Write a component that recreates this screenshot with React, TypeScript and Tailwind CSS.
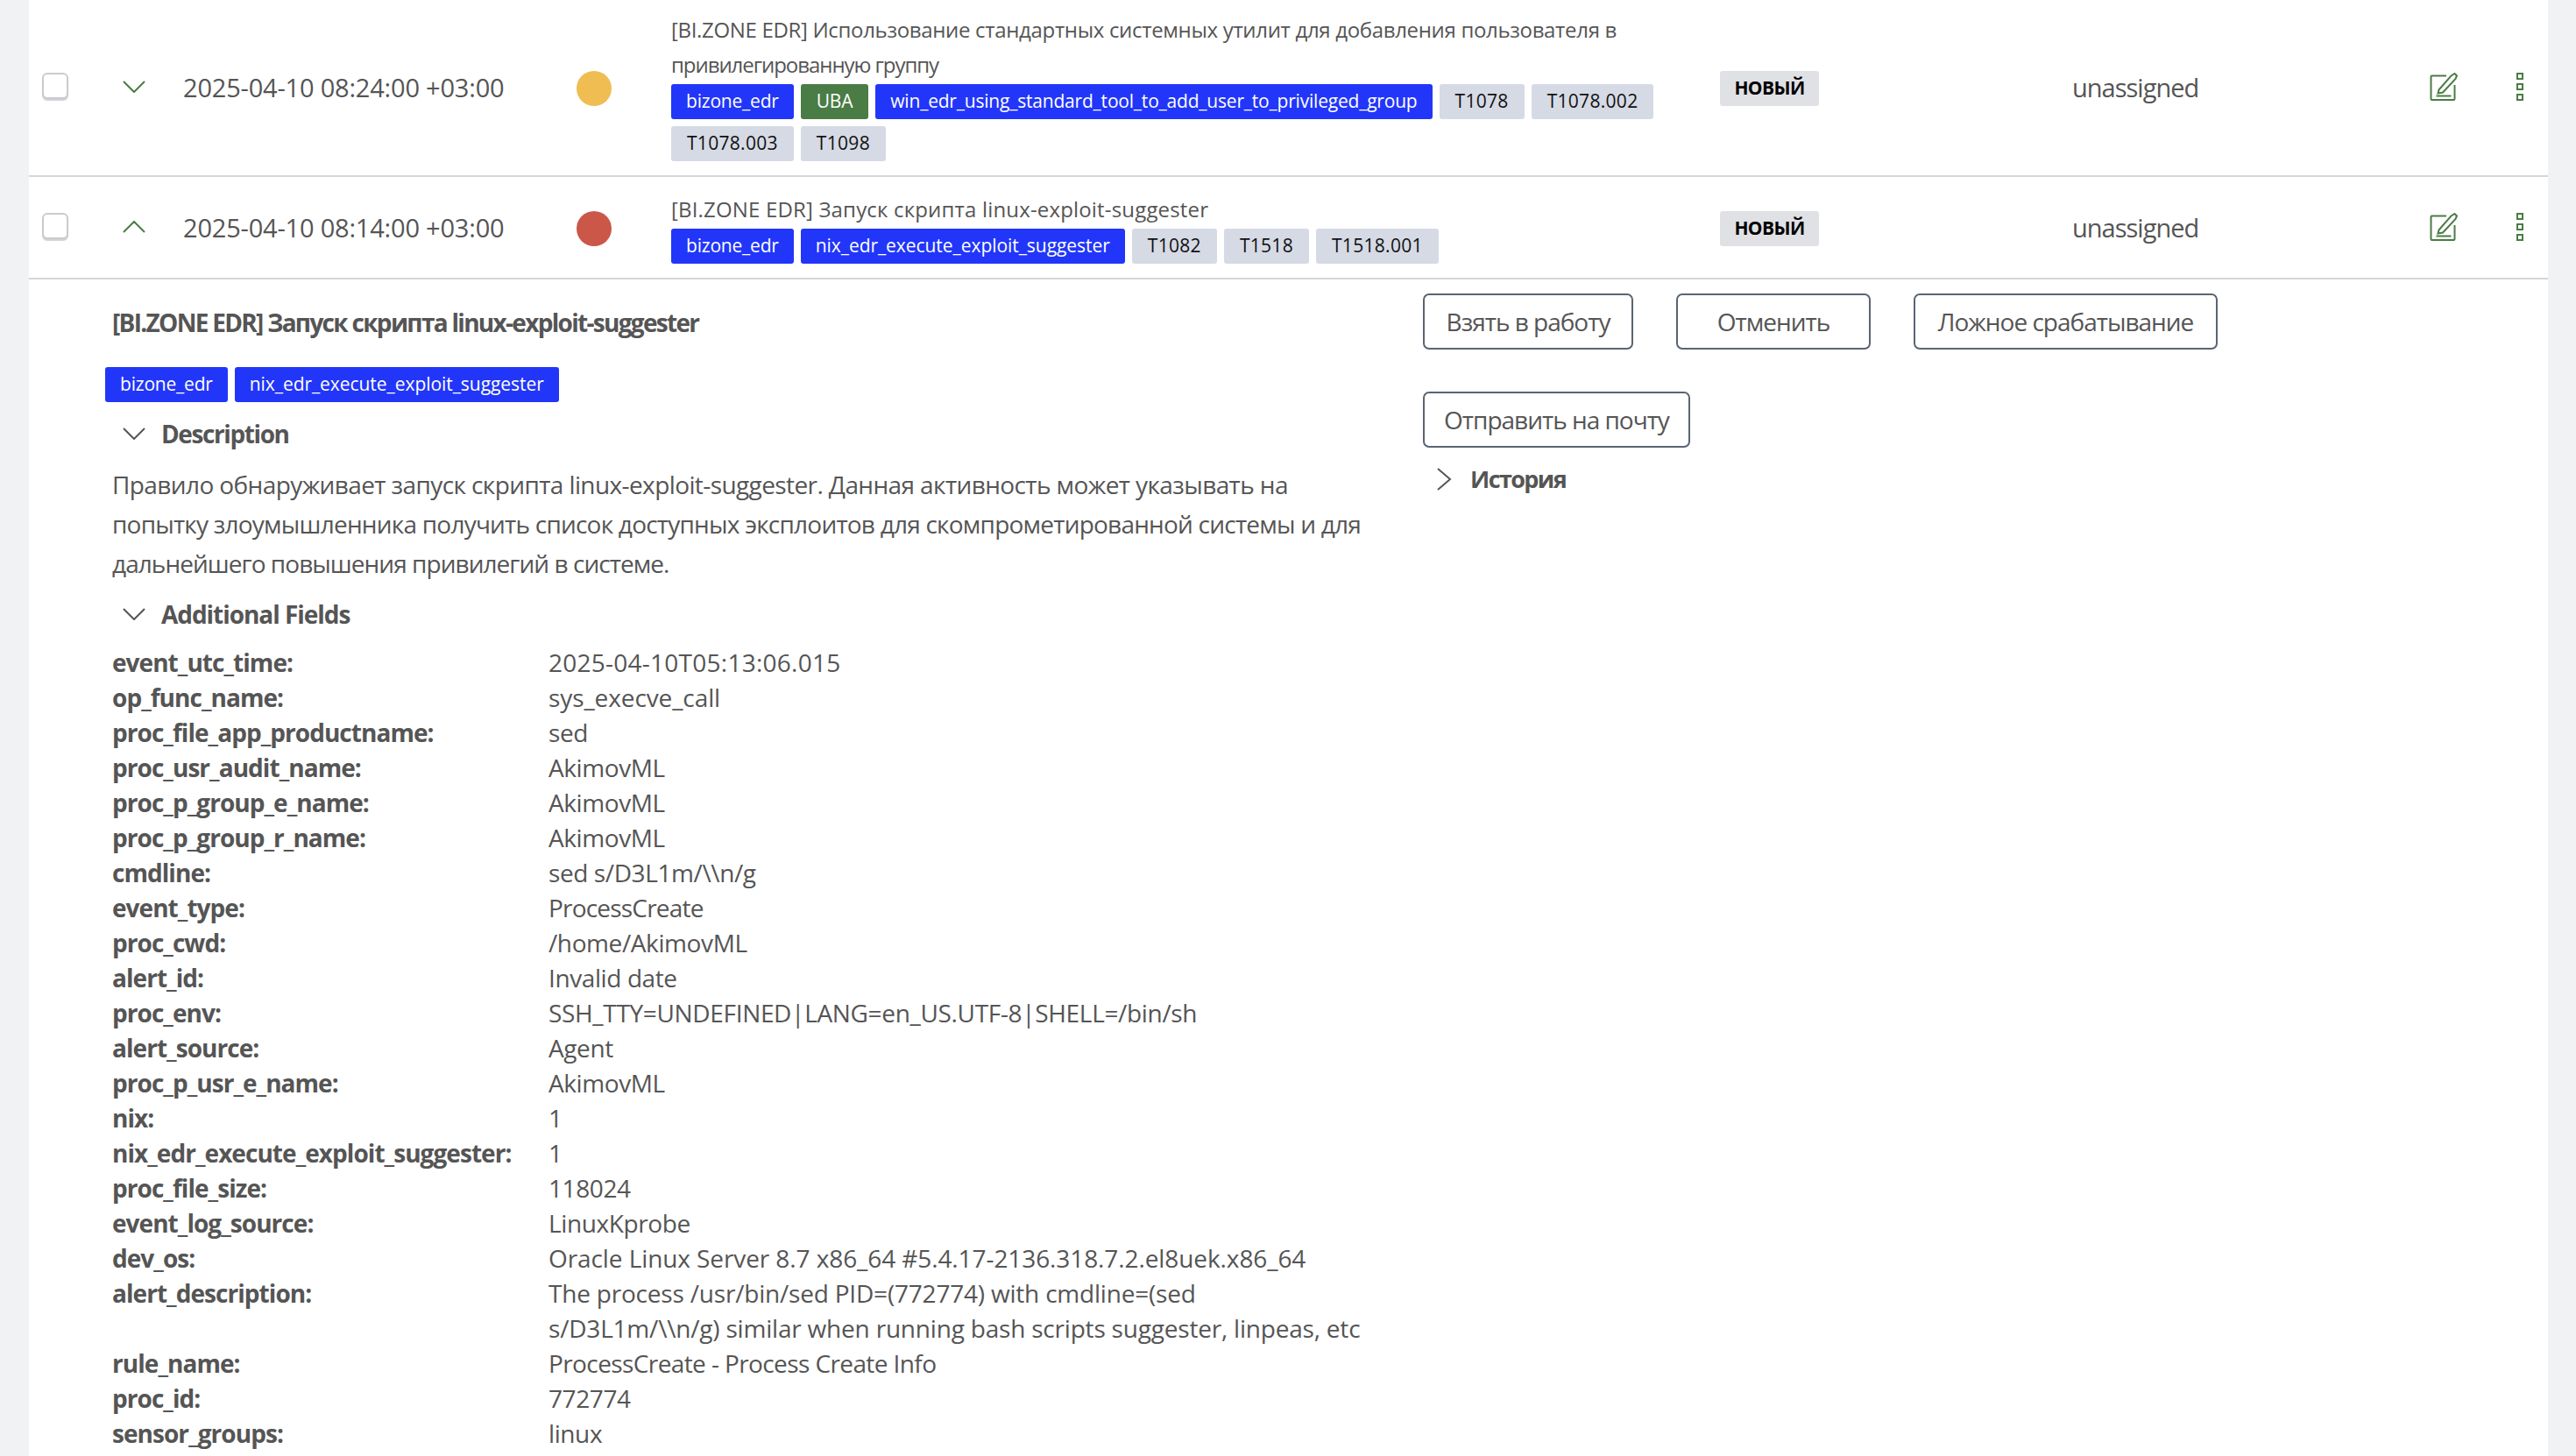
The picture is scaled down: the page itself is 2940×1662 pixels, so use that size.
import clsx from "clsx";

// third item is a per-value tracking fix, the fallback font's widths differ from the original
const fields: [string, string, string?][] = [
  ["event_utc_time:", "2025-04-10T05:13:06.015", "tracking-[0.25px]"],
  ["op_func_name:", "sys_execve_call", "tracking-[-0.1px]"],
  ["proc_file_app_productname:", "sed"],
  ["proc_usr_audit_name:", "AkimovML"],
  ["proc_p_group_e_name:", "AkimovML"],
  ["proc_p_group_r_name:", "AkimovML"],
  ["cmdline:", "sed s/D3L1m/\\\\n/g"],
  ["event_type:", "ProcessCreate", "tracking-[-0.8px]"],
  ["proc_cwd:", "/home/AkimovML"],
  ["alert_id:", "Invalid date"],
  ["proc_env:", "SSH_TTY=UNDEFINED|LANG=en_US.UTF-8|SHELL=/bin/sh", "tracking-[-0.33px]"],
  ["alert_source:", "Agent"],
  ["proc_p_usr_e_name:", "AkimovML"],
  ["nix:", "1"],
  ["nix_edr_execute_exploit_suggester:", "1"],
  ["proc_file_size:", "118024"],
  ["event_log_source:", "LinuxKprobe"],
  ["dev_os:", "Oracle Linux Server 8.7 x86_64 #5.4.17-2136.318.7.2.el8uek.x86_64", "tracking-[-0.09px]"],
  [
    "alert_description:",
    "The process /usr/bin/sed PID=(772774) with cmdline=(sed\ns/D3L1m/\\\\n/g) similar when running bash scripts suggester, linpeas, etc",
    "tracking-[-0.2px]",
  ],
  ["rule_name:", "ProcessCreate - Process Create Info", "tracking-[-0.6px]"],
  ["proc_id:", "772774"],
  ["sensor_groups:", "linux"],
];

type TagKind = "blue" | "blueWide" | "green" | "gray";

const Tag = ({ label, kind = "gray" }: { label: string; kind?: TagKind }) => (
  <span
    className={clsx(
      "flex h-10 items-center rounded-[3px] text-[21px]",
      kind === "blue" && "bg-[#2236f9] px-[17px] tracking-[-0.2px] text-white",
      kind === "blueWide" && "bg-[#2236f9] px-[17px] tracking-[-0.05px] text-white",
      kind === "green" && "bg-[#4a7c45] px-[18px] tracking-[-0.2px] text-white",
      kind === "gray" && "bg-[#d5dae5] px-[18px] tracking-[0.3px] text-[#111]"
    )}
  >
    {label}
  </span>
);

const ChevronDown = () => (
  <svg width="26" height="14" viewBox="0 0 26 14" fill="none" stroke="currentColor" strokeWidth="2" className="shrink-0">
    <path d="M1 1l12 12L25 1" />
  </svg>
);

const ChevronUp = () => (
  <svg width="26" height="14" viewBox="0 0 26 14" fill="none" stroke="currentColor" strokeWidth="2" className="shrink-0">
    <path d="M1 13L13 1l12 12" />
  </svg>
);

const ChevronRight = () => (
  <svg width="18" height="26" viewBox="0 0 18 26" fill="none" stroke="currentColor" strokeWidth="2" className="shrink-0">
    <path d="M2 1l14 12L2 25" />
  </svg>
);

const EditIcon = () => (
  <svg width="32" height="32" viewBox="0 0 32 32" fill="none" stroke="#4a7c45" strokeWidth="2" className="mb-[2px]">
    <path d="M19 3.5H2.5a1 1 0 0 0-1 1V30a1 1 0 0 0 1 1h25a1 1 0 0 0 1-1V14" />
    <path d="M10.5 19.5 24.5 3.5l4 -2.5 2.5 2.5-1.5 3.5L15 22.5l-5.5 1z" />
    <path d="M7.5 26.5h17" />
  </svg>
);

const Row = ({
  date,
  dot,
  open,
  title,
  tags,
  className,
  titleClass,
}: {
  date: string;
  dot: string;
  open?: boolean;
  title: [string, string][];
  tags: { label: string; kind?: TagKind }[];
  className: string;
  titleClass: string;
}) => (
  <div className={clsx("flex border-b-2 border-[#d5d6da]", className)}>
    <div className="flex w-[733px] shrink-0 items-center">
      <span className="mb-[4px] ml-[15px] size-[30px] rounded-[6px] border-2 border-[#c9cbcf] bg-white shadow-[0_2px_1px_#d0d2d6]" />
      <span className="mb-[2px] ml-[62px] w-[69px] text-[#4a7c45]">{open ? <ChevronUp /> : <ChevronDown />}</span>
      <span className="w-[449px] text-[29px] tracking-[-0.2px] text-[#555]">{date}</span>
      <span className={clsx("mt-[2px] size-10 rounded-full", dot)} />
    </div>
    <div className={clsx("w-[1197px] shrink-0", titleClass)}>
      {title.map(([line, tracking]) => (
        <div key={line} className={clsx("h-10 text-[24px] leading-10 text-[#555]", tracking)}>
          {line}
        </div>
      ))}
      <div className="mt-[2px] flex w-[1130px] flex-wrap gap-x-2 gap-y-2">
        {tags.map((t) => (
          <Tag key={t.label} label={t.label} kind={t.kind} />
        ))}
      </div>
    </div>
    <div className="flex w-[402px] shrink-0 items-center">
      <span className="mt-[2px] flex h-10 w-[113px] items-center justify-center rounded-[3px] bg-[#e0e1e5] text-[21px] font-bold tracking-[-0.6px] text-black">
        НОВЫЙ
      </span>
    </div>
    <div className="flex flex-1 items-center">
      <span className="w-[408px] text-[29px] tracking-[-1px] text-[#555]">unassigned</span>
      <EditIcon />
      <span className="mb-[2px] ml-[67px] flex flex-col gap-[4px]">
        <i className="size-2 border-2 border-[#4a7c45]" />
        <i className="size-2 border-2 border-[#4a7c45]" />
        <i className="size-2 border-2 border-[#4a7c45]" />
      </span>
    </div>
  </div>
);

const Action = ({ label, className }: { label: string; className: string }) => (
  <button
    className={clsx(
      "flex h-16 items-center justify-center rounded-[7px] border-2 border-[#5a6472] bg-white text-[28px] tracking-[-1px] text-[#555]",
      className
    )}
  >
    {label}
  </button>
);

export default function App() {
  return (
    <div
      className="h-[1662px] overflow-hidden bg-[#f1f2f4] pr-[32px] pl-[33px]"
      style={{ fontFamily: '"Open Sans", "Noto Sans", sans-serif' }}
    >
      <div className="h-full bg-white">
        <Row
          date="2025-04-10 08:24:00 +03:00"
          dot="bg-[#efbd52]"
          className="h-[202px]"
          titleClass="pt-[14px]"
          title={[
            ["[BI.ZONE EDR] Использование стандартных системных утилит для добавления пользователя в", "tracking-[-0.33px]"],
            ["привилегированную группу", "tracking-[-1.05px]"],
          ]}
          tags={[
            { label: "bizone_edr", kind: "blue" },
            { label: "UBA", kind: "green" },
            { label: "win_edr_using_standard_tool_to_add_user_to_privileged_group", kind: "blue" },
            { label: "T1078" },
            { label: "T1078.002" },
            { label: "T1078.003" },
            { label: "T1098" },
          ]}
        />
        <Row
          open
          date="2025-04-10 08:14:00 +03:00"
          dot="bg-[#cb5749]"
          className="h-[117px]"
          titleClass="pt-[17px]"
          title={[["[BI.ZONE EDR] Запуск скрипта linux-exploit-suggester", "tracking-[0.17px]"]]}
          tags={[
            { label: "bizone_edr", kind: "blue" },
            { label: "nix_edr_execute_exploit_suggester", kind: "blueWide" },
            { label: "T1082" },
            { label: "T1518" },
            { label: "T1518.001" },
          ]}
        />
        <div className="flex">
          <div className="w-[1591px] shrink-0 pl-[87px]">
            <h2 className="mt-[29px] ml-[8px] h-10 text-[28px] font-bold leading-10 tracking-[-1.7px] text-[#555]">
              [BI.ZONE EDR] Запуск скрипта linux-exploit-suggester
            </h2>
            <div className="mt-[31px] flex gap-2">
              <Tag label="bizone_edr" kind="blue" />
              <Tag label="nix_edr_execute_exploit_suggester" kind="blueWide" />
            </div>
            <div className="mt-[16px] ml-[20px] flex h-10 items-center gap-[18px] text-[28px] font-bold tracking-[-1.4px] text-[#555]">
              <ChevronDown />
              Description
            </div>
            <div className="mt-[16px] ml-[8px] whitespace-nowrap text-[28px] leading-[45px] text-[#555]">
              <p className="tracking-[-0.6px]">
                Правило обнаруживает запуск скрипта linux-exploit-suggester. Данная активность может указывать на
              </p>
              <p className="tracking-[-0.78px]">
                попытку злоумышленника получить список доступных эксплоитов для скомпрометированной системы и для
              </p>
              <p className="tracking-[-0.95px]">дальнейшего повышения привилегий в системе.</p>
            </div>
            <div className="mt-[15px] ml-[20px] flex h-10 items-center gap-[18px] text-[28px] font-bold tracking-[-1.05px] text-[#555]">
              <ChevronDown />
              Additional Fields
            </div>
            <dl className="mt-[15px] ml-[8px] grid grid-cols-[498px_1fr] text-[28px] leading-10 text-[#555]">
              {fields.map(([k, v, tracking]) => (
                <div key={k} className="contents">
                  <dt className="font-bold tracking-[-0.95px]">{k}</dt>
                  <dd className={clsx("whitespace-pre-line", tracking ?? "tracking-[-0.4px]")}>{v}</dd>
                </div>
              ))}
            </dl>
          </div>
          <div className="pt-[16px]">
            <div className="flex gap-[49px]">
              <Action label="Взять в работу" className="w-[240px]" />
              <Action label="Отменить" className="w-[222px]" />
              <Action label="Ложное срабатывание" className="w-[347px]" />
            </div>
            <Action label="Отправить на почту" className="mt-[48px] w-[305px]" />
            <div className="mt-[16px] ml-[15px] flex h-10 items-center gap-[21px] text-[27px] font-bold tracking-[-1.6px] text-[#555]">
              <ChevronRight />
              История
            </div>
          </div>
        </div>
      </div>
    </div>
  );
}
